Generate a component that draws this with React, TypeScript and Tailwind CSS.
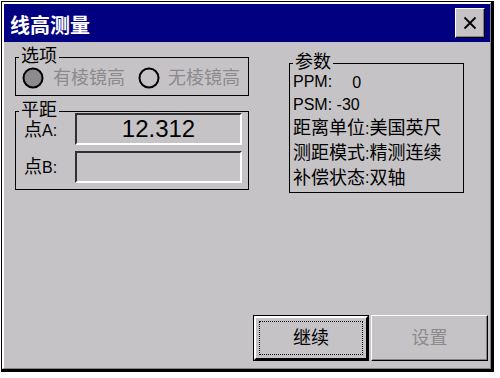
import type { ReactNode } from "react";

const Half = ({ children }: { children: ReactNode }) => (
  <span className="font-[family-name:'Liberation_Sans',sans-serif] text-[16px]">{children}</span>
);

const GroupBox = ({
  title,
  className,
  children,
}: {
  title: string;
  className: string;
  children: ReactNode;
}) => (
  <div className={`relative border border-black ${className}`}>
    <span className="absolute -top-[11px] left-[3px] bg-[#c6c3c6] px-[2px] text-[18px] leading-[18px] text-black">
      {title}
    </span>
    {children}
  </div>
);

const Radio = ({ checked }: { checked: boolean }) => (
  <svg width="22" height="22" viewBox="0 0 22 22">
    <circle cx="11" cy="11" r="9.5" fill={checked ? "#8c8a8c" : "#c6c3c6"} stroke="#000" strokeWidth="2" />
  </svg>
);

const SunkenField = ({ children }: { children?: ReactNode }) => (
  <div className="flex h-[32px] w-[167px] items-center justify-center border-2 border-t-[#303030] border-l-[#303030] border-b-white border-r-white bg-[#c6c3c6] font-[family-name:'Liberation_Sans',sans-serif] text-[24px] leading-none text-black">
    {children}
  </div>
);

export default function App() {
  return (
    <div className="h-[378px] w-[500px] bg-white pl-[1px] pt-[1px] font-[family-name:'Liberation_Sans','Noto_Sans_CJK_SC',sans-serif]">
      <div className="h-[371px] w-[493px] border-t border-l border-r-[3px] border-b-[3px] border-black">
        <div className="flex h-full flex-col border-t-2 border-l-2 border-r border-b border-t-white border-l-white border-r-[#848284] border-b-[#848284] bg-[#c6c3c6]">
          {/* title bar */}
          <div className="flex h-[38px] items-center justify-between bg-[#000080] pl-[6px] pr-[5px]">
            <span className="pt-[5px] text-[20px] font-bold leading-none text-white">线高测量</span>
            <button className="flex h-[30px] w-[30px] items-center justify-center border border-t-white border-l-white border-r-black border-b-black bg-[#c6c3c6] shadow-[inset_-1px_-1px_0_#848284]">
              <svg width="14" height="14" viewBox="0 0 14 14">
                <path d="M1.5 1.5 12.5 12.5M12.5 1.5 1.5 12.5" stroke="#000" strokeWidth="1.8" />
              </svg>
            </button>
          </div>

          {/* body */}
          <div className="flex flex-1 flex-col">
            <div className="flex items-start pl-[11px] pt-[15px]">
              <div className="flex flex-col gap-[15px]">
                <GroupBox title="选项" className="h-[39px] w-[234px]">
                  <div className="flex items-center pl-[6px] pt-[9px] text-[18px] leading-none text-[#8c8a8c]">
                    <Radio checked />
                    <span className="ml-[9px]">有棱镜高</span>
                    <span className="ml-[13px] flex">
                      <Radio checked={false} />
                    </span>
                    <span className="ml-[8px]">无棱镜高</span>
                  </div>
                </GroupBox>
                <GroupBox title="平距" className="h-[79px] w-[234px]">
                  <div className="flex flex-col gap-[6px] pl-[8px] pt-[1px] text-[18px] leading-none text-black">
                    <div className="flex items-center">
                      <span className="w-[51px] pt-[2px]">
                        点<Half>A:</Half>
                      </span>
                      <SunkenField>12.312</SunkenField>
                    </div>
                    <div className="flex items-center">
                      <span className="w-[51px]">
                        点<Half>B:</Half>
                      </span>
                      <SunkenField />
                    </div>
                  </div>
                </GroupBox>
              </div>

              <GroupBox title="参数" className="ml-[40px] mt-[6px] h-[130px] w-[175px]">
                <div className="flex flex-col pl-[3px] pt-[6px] text-[18px] text-black">
                  <div className="flex h-[24px] items-center">
                    <Half>PPM:</Half>
                    <span className="ml-[20px]">
                      <Half>0</Half>
                    </span>
                  </div>
                  <div className="flex h-[22px] items-center">
                    <Half>PSM: -30</Half>
                  </div>
                  <div className="flex h-[25px] items-center">
                    距离单位<Half>:</Half>美国英尺
                  </div>
                  <div className="flex h-[25px] items-center">
                    测距模式<Half>:</Half>精测连续
                  </div>
                  <div className="flex h-[24px] items-center">
                    补偿状态<Half>:</Half>双轴
                  </div>
                </div>
              </GroupBox>
            </div>

            {/* buttons */}
            <div className="mt-auto flex justify-end gap-[2px] pb-[7px] pr-[2px]">
              <button className="h-[46px] w-[116px] border border-black bg-[#c6c3c6] p-0">
                <div className="flex h-full w-full items-center justify-center border-2 border-t-white border-l-white border-r-black border-b-black p-[3px]">
                  <div className="flex h-full w-full items-center justify-center border border-dotted border-black text-[18px] leading-none text-black">
                    继续
                  </div>
                </div>
              </button>
              <button className="flex h-[46px] w-[117px] items-center justify-center border border-t-white border-l-white border-r-black border-b-black bg-[#c6c3c6] text-[18px] leading-none text-[#8c8a8c] shadow-[inset_-1px_-1px_0_#848284]">
                设置
              </button>
            </div>
          </div>
        </div>
      </div>
    </div>
  );
}
